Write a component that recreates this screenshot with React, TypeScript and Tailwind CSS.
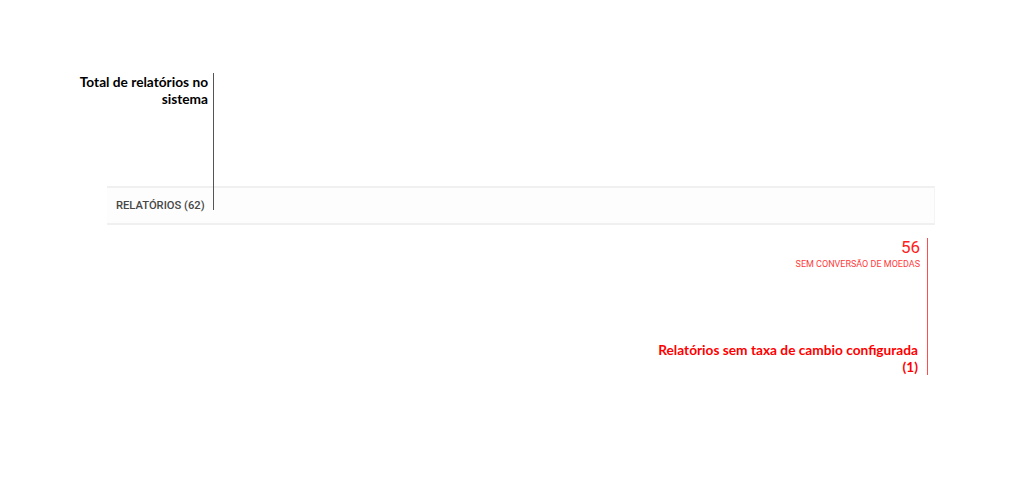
export default function App() {
  return (
    <div className="relative w-full h-[502px] bg-white overflow-hidden">
      {/* ── CARD ─────────────────────────────────────────── */}
      <div className="ml-[107px] mt-[186px] w-[828px] h-[39px] flex items-center pl-[9px] bg-[#fdfdfd] border-t-2 border-b-2 border-r border-t-[#f0f0f0] border-b-[#f0f0f0] border-r-[#f4f4f4]">
        <span className="mt-[1px] font-['Roboto',sans-serif] text-[11.2px] font-medium text-[#474747]">
          RELATÓRIOS (62)
        </span>
      </div>

      {/* ── ANOTAÇÃO: total ──────────────────────────────── */}
      <div className="absolute left-0 top-[73px] w-[214px] h-[137px] border-r border-[#555]">
        <p className="pr-[5px] text-right font-['Lato',sans-serif] font-bold text-[13.7px] leading-[17px] text-black">
          Total de relatórios no
          <br />
          sistema
        </p>
      </div>

      {/* ── ANOTAÇÃO: sem conversão ──────────────────────── */}
      <div className="absolute left-[600px] top-[238px] w-[328px] h-[137px] border-r border-[#ff4d4d] flex flex-col items-end pr-[7px]">
        <span className="font-['Roboto',sans-serif] text-[17px] leading-[18px] text-[#ff2020]">56</span>
        <span className="mt-[3px] font-['Roboto',sans-serif] text-[9px] leading-[11px] text-[#ff3b3b]">
          SEM CONVERSÃO DE MOEDAS
        </span>
        <p className="mt-auto pr-[2px] text-right font-['Lato',sans-serif] font-bold text-[13.7px] leading-[17px] text-[#ff0000]">
          Relatórios sem taxa de cambio configurada
          <br />
          (1)
        </p>
      </div>
    </div>
  )
}
